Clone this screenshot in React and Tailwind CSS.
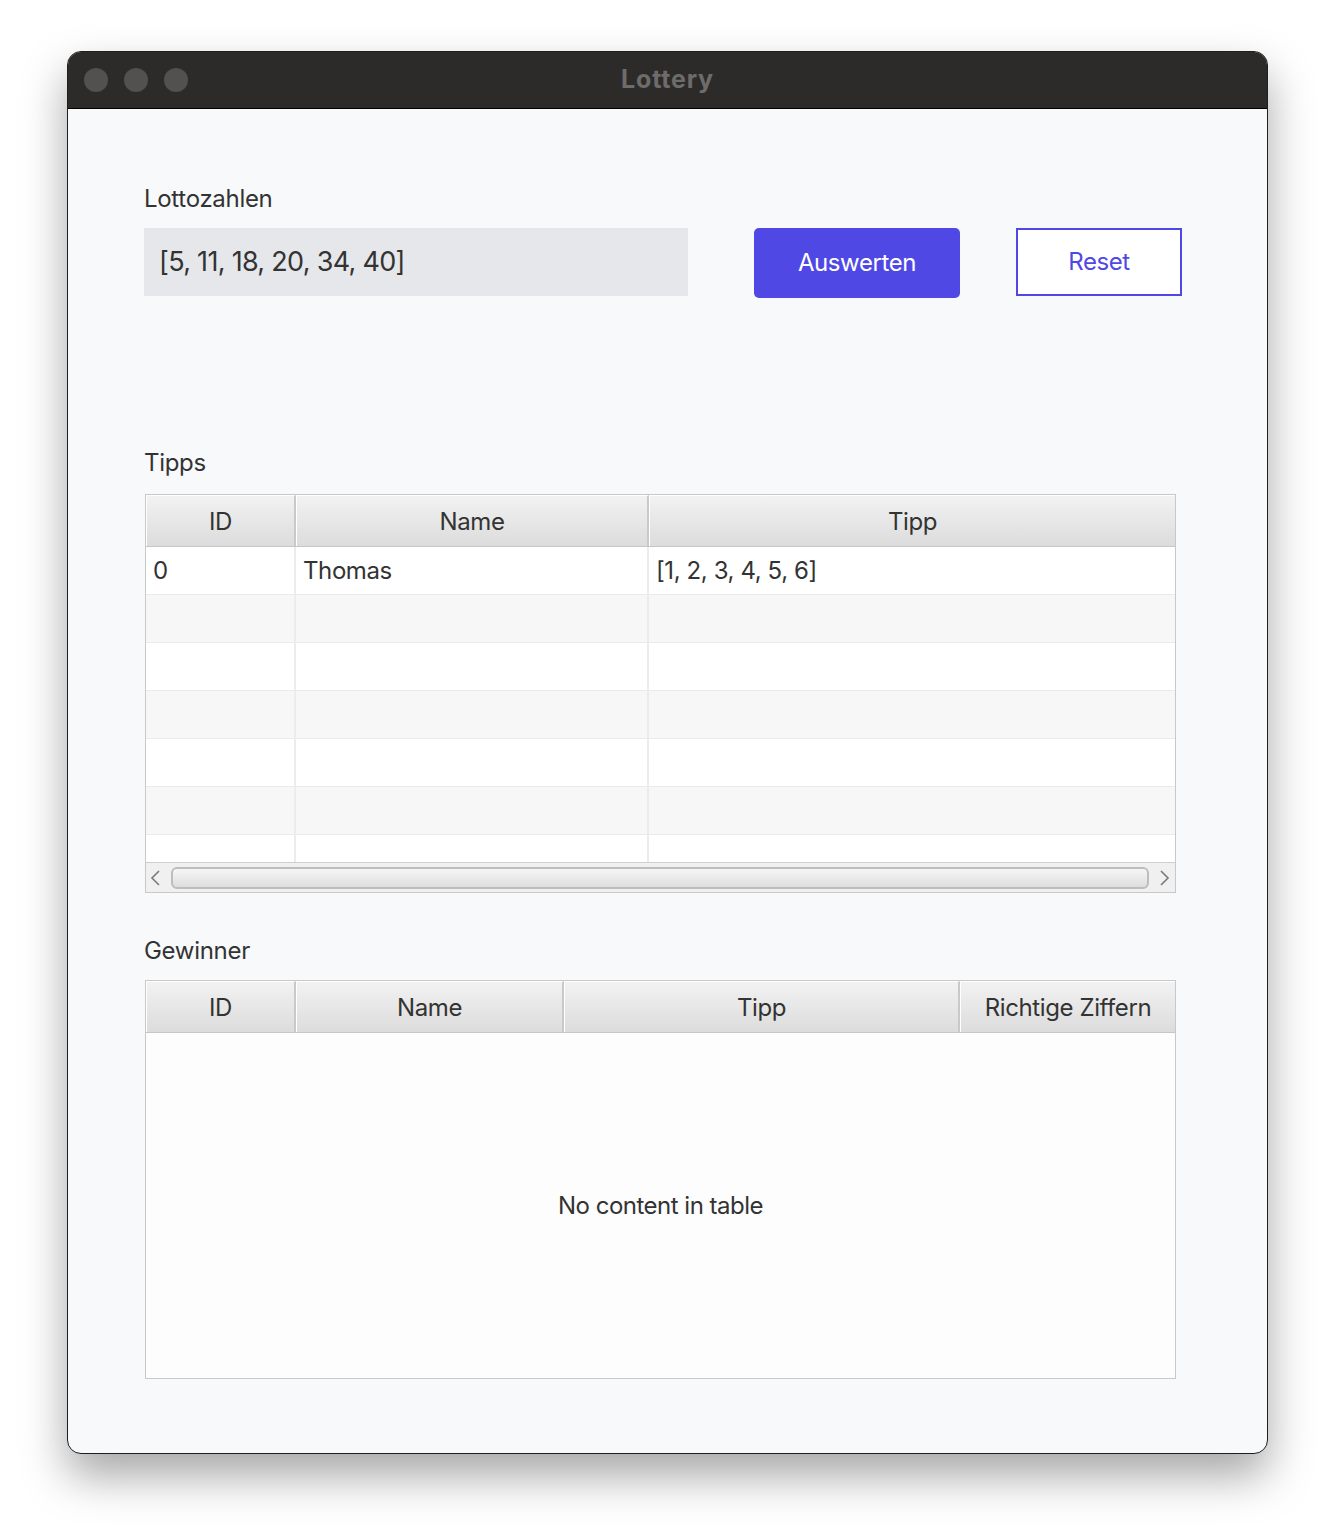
const tippCols = ['w-[150px]', 'w-[353px]', 'flex-1']
const winnerCols = ['w-[150px]', 'w-[268px]', 'w-[396px]', 'flex-1']

function HeaderCell({ label, width, last }) {
  return (
    <div
      className={`${width} h-full flex items-center justify-center pt-[2px] bg-gradient-to-b from-[#f2f2f2] to-[#dcdcdc] border-t border-l border-white ${last ? '' : 'border-r-2 border-r-[#c9c9c9]'} text-[24px] tracking-[-0.4px] text-[#333]`}
    >
      {label}
    </div>
  )
}

function Row({ cells, striped }) {
  return (
    <div className={`flex h-[48px] border-b border-[#ebebeb] ${striped ? 'bg-[#f7f7f7]' : 'bg-white'}`}>
      {tippCols.map((w, i) => (
        <div
          key={i}
          className={`${w} h-full flex items-center pl-[7px] text-[24px] tracking-[-0.4px] text-[#333] ${i < 2 ? 'border-r-2 border-[#ececec]' : ''}`}
        >
          {cells ? cells[i] : ''}
        </div>
      ))}
    </div>
  )
}

function Arrow({ left }) {
  return (
    <svg width="12" height="18" viewBox="0 0 12 18" className="shrink-0">
      <polyline
        points={left ? '10,2 3,9 10,16' : '2,2 9,9 2,16'}
        fill="none"
        stroke="#7a7a7a"
        strokeWidth="1.6"
      />
    </svg>
  )
}

export default function App() {
  return (
    <div className="min-h-screen bg-white pt-[51px] pl-[67px] font-['Inter',_'Liberation_Sans',_sans-serif]">
      <div className="w-[1201px] h-[1403px] rounded-[14px] overflow-hidden border border-[#1e1e1e] bg-[#f8f9fb] shadow-[0_22px_45px_rgba(0,0,0,0.35)] flex flex-col">
        {/* title bar */}
        <div className="relative h-[57px] bg-[#2d2b29] border-b border-black flex items-center pl-[16px] gap-[16px] shrink-0">
          <span className="w-[24px] h-[24px] rounded-full bg-[#525150]" />
          <span className="w-[24px] h-[24px] rounded-full bg-[#525150]" />
          <span className="w-[24px] h-[24px] rounded-full bg-[#525150]" />
          <div className="absolute inset-0 flex items-center justify-center text-[25px] font-bold text-[#6d6c6b] tracking-[0.8px]">
            Lottery
          </div>
        </div>

        <div className="pl-[76px] pt-[76px] flex flex-col text-[#333]">
          {/* Lottozahlen */}
          <div className="h-[28px] leading-[28px] text-[24px] tracking-[-0.3px]">Lottozahlen</div>
          <div className="mt-[15px] flex items-start">
            <div className="shrink-0 w-[544px] h-[68px] bg-[#e6e7ea] flex items-center pl-[15px] text-[27px] tracking-[-0.7px] text-[#333]">
              [5, 11, 18, 20, 34, 40]
            </div>
            <button className="shrink-0 ml-[66px] w-[206px] h-[70px] rounded-[5px] bg-[#5048e5] text-white text-[24px] tracking-[-0.4px]">
              Auswerten
            </button>
            <button className="shrink-0 ml-[56px] w-[166px] h-[68px] border-2 border-[#5048e5] bg-white text-[#5048e5] text-[24px] tracking-[-0.4px]">
              Reset
            </button>
          </div>

          {/* Tipps */}
          <div className="mt-[151px] h-[28px] leading-[28px] text-[24px] tracking-[-0.3px]">Tipps</div>
          <div className="mt-[17px] ml-[1px] w-[1031px] h-[399px] border border-[#c8c8c8] bg-white flex flex-col">
            <div className="flex h-[52px] border-b border-[#c6c6c6]">
              <HeaderCell label="ID" width={tippCols[0]} />
              <HeaderCell label="Name" width={tippCols[1]} />
              <HeaderCell label="Tipp" width={tippCols[2]} last />
            </div>
            <div className="flex-1 overflow-hidden">
              <Row cells={['0', 'Thomas', '[1, 2, 3, 4, 5, 6]']} />
              <Row striped />
              <Row />
              <Row striped />
              <Row />
              <Row striped />
              <Row />
            </div>
            <div className="h-[30px] border-t border-[#cfcfcf] bg-[#f0f0f0] flex items-center shrink-0 pl-[3px] pr-[4px]">
              <Arrow left />
              <div className="flex-1 mx-[10px] h-[22px] rounded-[6px] border-2 border-[#bdbdbd] bg-gradient-to-b from-[#f6f6f6] to-[#dedede]" />
              <Arrow />
            </div>
          </div>

          {/* Gewinner */}
          <div className="mt-[44px] h-[28px] leading-[28px] text-[24px] tracking-[-0.3px]">Gewinner</div>
          <div className="mt-[15px] ml-[1px] w-[1031px] h-[399px] border border-[#c8c8c8] bg-[#fdfdfd] flex flex-col">
            <div className="flex h-[52px] border-b border-[#c6c6c6]">
              <HeaderCell label="ID" width={winnerCols[0]} />
              <HeaderCell label="Name" width={winnerCols[1]} />
              <HeaderCell label="Tipp" width={winnerCols[2]} />
              <HeaderCell label="Richtige Ziffern" width={winnerCols[3]} last />
            </div>
            <div className="flex-1 flex items-center justify-center text-[24px] tracking-[-0.5px] text-[#333]">
              No content in table
            </div>
          </div>
        </div>
      </div>
    </div>
  )
}
